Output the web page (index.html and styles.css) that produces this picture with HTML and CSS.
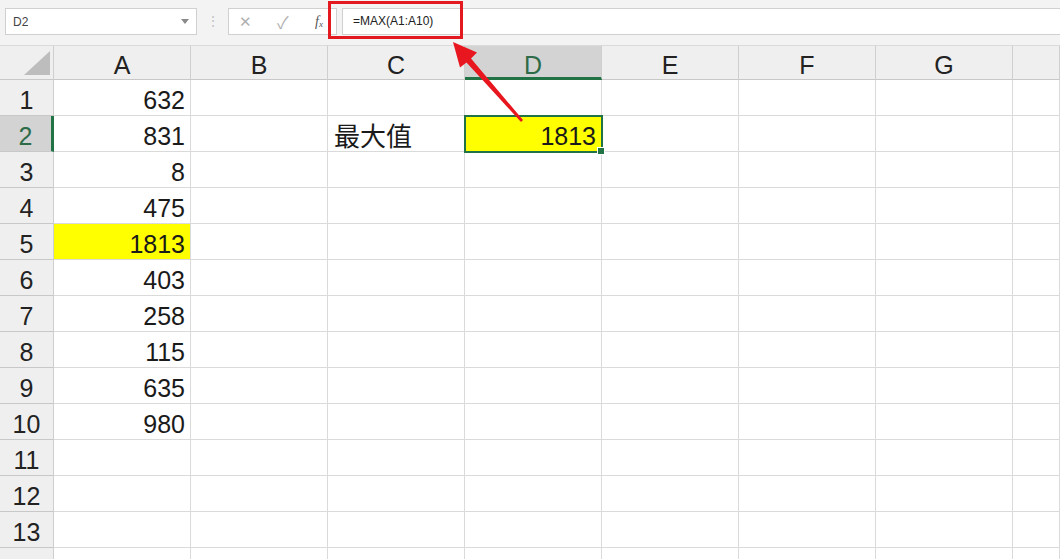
FILE: index.html
```html
<!DOCTYPE html>
<html lang="zh">
<head>
<meta charset="utf-8">
<title>Excel MAX</title>
<link rel="stylesheet" href="styles.css">
</head>
<body>
<div class="app">
  <div class="toolbar">
    <div class="namebox"><span class="nb-text">D2</span><span class="nb-arrow"></span></div>
    <div class="sep">⋮</div>
    <div class="fnbox">
      <span class="ico x">✕</span>
      <span class="ico ok">✓</span>
      <span class="ico fx"><i>f</i><sub>x</sub></span>
    </div>
    <div class="formula">=MAX(A1:A10)</div>
  </div>
  <div class="sheet">
    <div class="hd corner"><span class="tri"></span></div>
    <div class="hd col">A</div>
    <div class="hd col">B</div>
    <div class="hd col">C</div>
    <div class="hd col active-col">D</div>
    <div class="hd col">E</div>
    <div class="hd col">F</div>
    <div class="hd col">G</div>
    <div class="hd col"></div>

    <div class="hd row">1</div><div class="c num">632</div><div class="c"></div><div class="c"></div><div class="c"></div><div class="c"></div><div class="c"></div><div class="c"></div><div class="c"></div>
    <div class="hd row active-row">2</div><div class="c num">831</div><div class="c"></div><div class="c cjk">最大值</div><div class="c num yellow sel">1813</div><div class="c"></div><div class="c"></div><div class="c"></div><div class="c"></div>
    <div class="hd row">3</div><div class="c num">8</div><div class="c"></div><div class="c"></div><div class="c"></div><div class="c"></div><div class="c"></div><div class="c"></div><div class="c"></div>
    <div class="hd row">4</div><div class="c num">475</div><div class="c"></div><div class="c"></div><div class="c"></div><div class="c"></div><div class="c"></div><div class="c"></div><div class="c"></div>
    <div class="hd row">5</div><div class="c num yellow">1813</div><div class="c"></div><div class="c"></div><div class="c"></div><div class="c"></div><div class="c"></div><div class="c"></div><div class="c"></div>
    <div class="hd row">6</div><div class="c num">403</div><div class="c"></div><div class="c"></div><div class="c"></div><div class="c"></div><div class="c"></div><div class="c"></div><div class="c"></div>
    <div class="hd row">7</div><div class="c num">258</div><div class="c"></div><div class="c"></div><div class="c"></div><div class="c"></div><div class="c"></div><div class="c"></div><div class="c"></div>
    <div class="hd row">8</div><div class="c num">115</div><div class="c"></div><div class="c"></div><div class="c"></div><div class="c"></div><div class="c"></div><div class="c"></div><div class="c"></div>
    <div class="hd row">9</div><div class="c num">635</div><div class="c"></div><div class="c"></div><div class="c"></div><div class="c"></div><div class="c"></div><div class="c"></div><div class="c"></div>
    <div class="hd row">10</div><div class="c num">980</div><div class="c"></div><div class="c"></div><div class="c"></div><div class="c"></div><div class="c"></div><div class="c"></div><div class="c"></div>
    <div class="hd row">11</div><div class="c"></div><div class="c"></div><div class="c"></div><div class="c"></div><div class="c"></div><div class="c"></div><div class="c"></div><div class="c"></div>
    <div class="hd row">12</div><div class="c"></div><div class="c"></div><div class="c"></div><div class="c"></div><div class="c"></div><div class="c"></div><div class="c"></div><div class="c"></div>
    <div class="hd row">13</div><div class="c"></div><div class="c"></div><div class="c"></div><div class="c"></div><div class="c"></div><div class="c"></div><div class="c"></div><div class="c"></div>
    <div class="hd row">14</div><div class="c"></div><div class="c"></div><div class="c"></div><div class="c"></div><div class="c"></div><div class="c"></div><div class="c"></div><div class="c"></div>
  </div>
  <div class="redbox"></div>
  <svg class="arrow" width="1060" height="559" viewBox="0 0 1060 559">
    <polygon points="453,42 477,52.5 471,58.5 523,120 521,122 466.5,62.5 460,67.5" fill="#e8161e"/>
  </svg>
</div>
</body>
</html>
```

FILE: styles.css
```css
html, body {
  margin: 0;
  padding: 0;
  width: 1060px;
  height: 559px;
  overflow: hidden;
  background: #ffffff;
}

.app {
  position: relative;
  width: 1060px;
  height: 559px;
  overflow: hidden;
  font-family: "Liberation Sans", "Noto Sans CJK SC", sans-serif;
}

.toolbar {
  height: 45px;
  background: #f3f3f3;
  display: flex;
  align-items: flex-start;
  padding-top: 8px;
  box-sizing: border-box;
}

.namebox {
  margin-left: 5px;
  width: 192px;
  height: 27px;
  box-sizing: border-box;
  background: #ffffff;
  border: 1px solid #d0d0d0;
  display: flex;
  align-items: center;
  justify-content: space-between;
  padding: 0 7px 0 7px;
  font-size: 12px;
  color: #444444;
}

.nb-arrow {
  width: 0;
  height: 0;
  border-left: 4px solid transparent;
  border-right: 4px solid transparent;
  border-top: 5px solid #8a8a8a;
}

.sep {
  width: 31px;
  text-align: center;
  color: #c4c4c4;
  font-size: 14px;
  line-height: 27px;
}

.fnbox {
  width: 109px;
  height: 27px;
  box-sizing: border-box;
  background: #ffffff;
  border: 1px solid #d0d0d0;
  display: flex;
  align-items: center;
  padding-left: 10px;
}

.ico {
  display: inline-block;
  color: #b0b0b0;
  font-size: 15px;
}

.ico.x { width: 38px; }
.ico.ok { width: 38px; font-size: 17px; }
.ico.fx {
  color: #555555;
  font-family: "Liberation Serif", serif;
  font-size: 14px;
}
.ico.fx sub { font-size: 9px; font-style: italic; vertical-align: -1px; }

.formula {
  margin-left: 5px;
  flex: 1;
  height: 27px;
  box-sizing: border-box;
  background: #ffffff;
  border: 1px solid #d0d0d0;
  border-right: none;
  font-size: 12px;
  line-height: 25px;
  padding-left: 10px;
  color: #222222;
}

.sheet {
  display: grid;
  grid-template-columns: 54px repeat(7, 137px) 1fr;
  grid-template-rows: 35px;
  grid-auto-rows: 36px;
}

.hd {
  background: #efefef;
  box-sizing: border-box;
  border-right: 1px solid #cfcfcf;
  border-bottom: 1px solid #c8c8c8;
  color: #222222;
  font-size: 25px;
  text-align: center;
}

.hd.col {
  line-height: 38px;
  border-top: 1px solid #dadada;
}

.hd.corner {
  position: relative;
  border-top: 1px solid #dadada;
}

.tri {
  position: absolute;
  right: 3px;
  bottom: 4px;
  width: 0;
  height: 0;
  border-left: 26px solid transparent;
  border-bottom: 24px solid #bdbdbd;
}

.hd.row {
  line-height: 40px;
  overflow: hidden;
}

.active-col {
  background: #d3d3d3;
  color: #2e6b48;
  border-bottom: 3px solid #217346;
  line-height: 36px;
}

.active-row {
  background: #d3d3d3;
  color: #2e6b48;
  border-right: 3px solid #217346;
}

.c {
  box-sizing: border-box;
  border-right: 1px solid #dadada;
  border-bottom: 1px solid #dadada;
  font-size: 25px;
  line-height: 40px;
  color: #1a1a1a;
  white-space: nowrap;
  overflow: visible;
}

.num {
  text-align: right;
  padding-right: 5px;
}

.cjk {
  font-family: "Noto Sans CJK SC", sans-serif;
  font-size: 26px;
  line-height: 38px;
  padding-left: 6px;
}

.yellow {
  background: #ffff00;
}

.sel {
  position: relative;
}

.sel::after {
  content: "";
  position: absolute;
  left: -1px;
  top: -1px;
  right: -2px;
  bottom: -2px;
  border: 2px solid #217346;
  box-sizing: border-box;
}

.sel::before {
  content: "";
  position: absolute;
  right: -4px;
  bottom: -4px;
  width: 6px;
  height: 6px;
  background: #217346;
  border: 1px solid #ffffff;
  z-index: 2;
}

.redbox {
  position: absolute;
  left: 328px;
  top: 1px;
  width: 135px;
  height: 38px;
  box-sizing: border-box;
  border: 3px solid #e3191f;
}

.arrow {
  position: absolute;
  left: 0;
  top: 0;
  pointer-events: none;
}
```
